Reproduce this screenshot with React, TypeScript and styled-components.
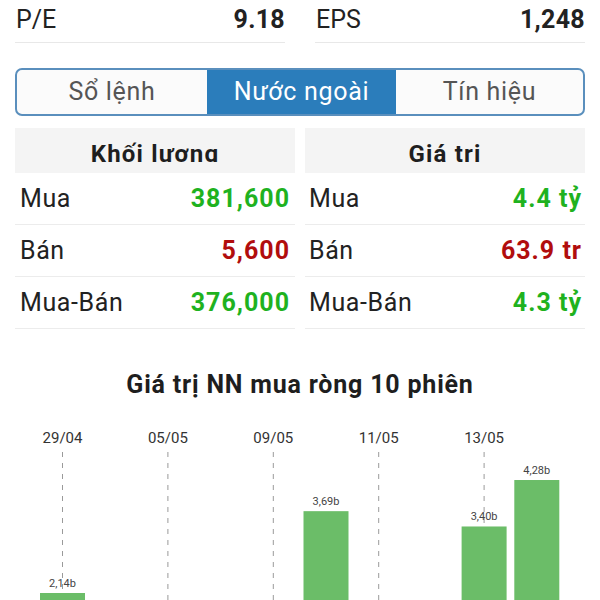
import styled, { createGlobalStyle } from 'styled-components';

const GlobalStyle = createGlobalStyle`
  html, body {
    margin: 0;
    padding: 0;
    background: #ffffff;
  }
  body {
    font-family: Roboto, "Noto Sans", sans-serif;
    color: #222222;
  }
`;

const Page = styled.div`
  width: 600px;
  overflow: hidden;
`;

const Content = styled.div`
  padding: 0 15px;
`;

const MetricGrid = styled.div`
  display: grid;
  grid-template-columns: 1fr 1fr;
  column-gap: 30px;
`;

const Metric = styled.div`
  display: flex;
  justify-content: space-between;
  align-items: center;
  box-sizing: border-box;
  height: 43px;
  padding: 0 0 4px 1px;
  border-bottom: 1px solid #e8e8e8;
  font-size: 25px;

  & > strong {
    font-weight: 700;
    letter-spacing: 0.3px;
  }
`;

const Tabs = styled.div`
  display: grid;
  grid-template-columns: 190px 189px 1fr;
  margin-top: 25px;
  height: 48px;
  box-sizing: border-box;
  border: 2px solid #5a8fbd;
  border-radius: 7px;
  overflow: hidden;
  background: #fbfbfb;
`;

const Tab = styled.div<{ active?: boolean }>`
  display: flex;
  align-items: center;
  justify-content: center;
  font-size: 25px;
  letter-spacing: 0.7px;
  color: ${({ active }) => (active ? '#ffffff' : '#555555')};
  background: ${({ active }) => (active ? '#2b7dbb' : 'transparent')};
  padding-bottom: 1px;
`;

const Tables = styled.div`
  display: grid;
  grid-template-columns: 1fr 1fr;
  column-gap: 10px;
  margin-top: 12px;
`;

const Table = styled.div<{ inset: number }>`
  display: flex;
  flex-direction: column;

  & > div:not(:first-child) {
    padding: 0 ${({ inset }) => (inset === 0 ? '5px 0 5px' : '3px 0 4px')};
  }
`;

const Header = styled.div`
  height: 45px;
  box-sizing: border-box;
  padding-top: 11px;
  background: #f4f4f4;
  text-align: center;
`;

const HeaderText = styled.span`
  display: inline-block;
  height: 23px;
  line-height: 30px;
  overflow: hidden;
  font-size: 24px;
  font-weight: 700;
  letter-spacing: 1.2px;
  color: #1e1e1e;
`;

const Row = styled.div`
  display: flex;
  justify-content: space-between;
  align-items: center;
  height: 52px;
  box-sizing: border-box;
  border-bottom: 1px solid #ececec;
  font-size: 25px;
  letter-spacing: 0.6px;
`;

const Value = styled.span<{ tone: 'up' | 'down' }>`
  font-weight: 700;
  letter-spacing: 1px;
  color: ${({ tone }) => (tone === 'up' ? '#1fb21f' : '#b10d0d')};
`;

const ChartTitle = styled.h2`
  margin: 41px 0 0;
  font-size: 25px;
  line-height: 30px;
  font-weight: 700;
  letter-spacing: 0.8px;
  text-align: center;
  color: #1e1e1e;
`;

const ChartBox = styled.svg`
  display: block;
  margin-top: 5px;
  font-family: Roboto, "Noto Sans", sans-serif;
`;

type Cell = { label: string; value: string; tone: 'up' | 'down' };

const volume: Cell[] = [
  { label: 'Mua', value: '381,600', tone: 'up' },
  { label: 'Bán', value: '5,600', tone: 'down' },
  { label: 'Mua-Bán', value: '376,000', tone: 'up' },
];

const amount: Cell[] = [
  { label: 'Mua', value: '4.4 tỷ', tone: 'up' },
  { label: 'Bán', value: '63.9 tr', tone: 'down' },
  { label: 'Mua-Bán', value: '4.3 tỷ', tone: 'up' },
];

const sessions = [
  { date: '29/04', value: 2.14 },
  { date: '04/05', value: 0.85 },
  { date: '05/05', value: 1.32 },
  { date: '06/05', value: 0.47 },
  { date: '09/05', value: 1.05 },
  { date: '10/05', value: 3.69 },
  { date: '11/05', value: 0.62 },
  { date: '12/05', value: 1.18 },
  { date: '13/05', value: 3.4 },
  { date: '16/05', value: 4.28 },
];

const BASE = 301;
const SCALE = 52.8;
const STEP = 52.7;
const FIRST = 62.5;
const BAR_W = 45;

const Chart = () => (
  <ChartBox width={600} height={310} viewBox="0 0 600 310">
    {sessions.map((s, i) => {
      const cx = FIRST + STEP * i;
      const top = BASE - s.value * SCALE;
      return (
        <g key={s.date}>
          {i % 2 === 0 && (
            <>
              <text x={cx} y={38} fontSize={15} fill="#333" textAnchor="middle">
                {s.date}
              </text>
              <line x1={cx} x2={cx} y1={47} y2={BASE} stroke="#9a9a9a" strokeWidth={1} strokeDasharray="5 6" />
            </>
          )}
          <rect x={cx - BAR_W / 2} y={top} width={BAR_W} height={s.value * SCALE} fill="#6bbd68" />
          <text x={cx} y={top - 6} fontSize={11} fill="#444" textAnchor="middle">
            {s.value.toFixed(2).replace('.', ',')}b
          </text>
        </g>
      );
    })}
  </ChartBox>
);

const App = () => (
  <Page>
    <GlobalStyle />
    <Content>
      <MetricGrid>
        <Metric>
          <span>P/E</span>
          <strong>9.18</strong>
        </Metric>
        <Metric>
          <span>EPS</span>
          <strong>1,248</strong>
        </Metric>
      </MetricGrid>

      <Tabs>
        <Tab>Sổ lệnh</Tab>
        <Tab active>Nước ngoài</Tab>
        <Tab>Tín hiệu</Tab>
      </Tabs>

      <Tables>
        <Table inset={0}>
          <Header>
            <HeaderText>Khối lượng</HeaderText>
          </Header>
          {volume.map((c) => (
            <Row key={c.label}>
              <span>{c.label}</span>
              <Value tone={c.tone}>{c.value}</Value>
            </Row>
          ))}
        </Table>
        <Table inset={1}>
          <Header>
            <HeaderText>Giá trị</HeaderText>
          </Header>
          {amount.map((c) => (
            <Row key={c.label}>
              <span>{c.label}</span>
              <Value tone={c.tone}>{c.value}</Value>
            </Row>
          ))}
        </Table>
      </Tables>

      <ChartTitle>Giá trị NN mua ròng 10 phiên</ChartTitle>
    </Content>
    <Chart />
  </Page>
);

export default App;
